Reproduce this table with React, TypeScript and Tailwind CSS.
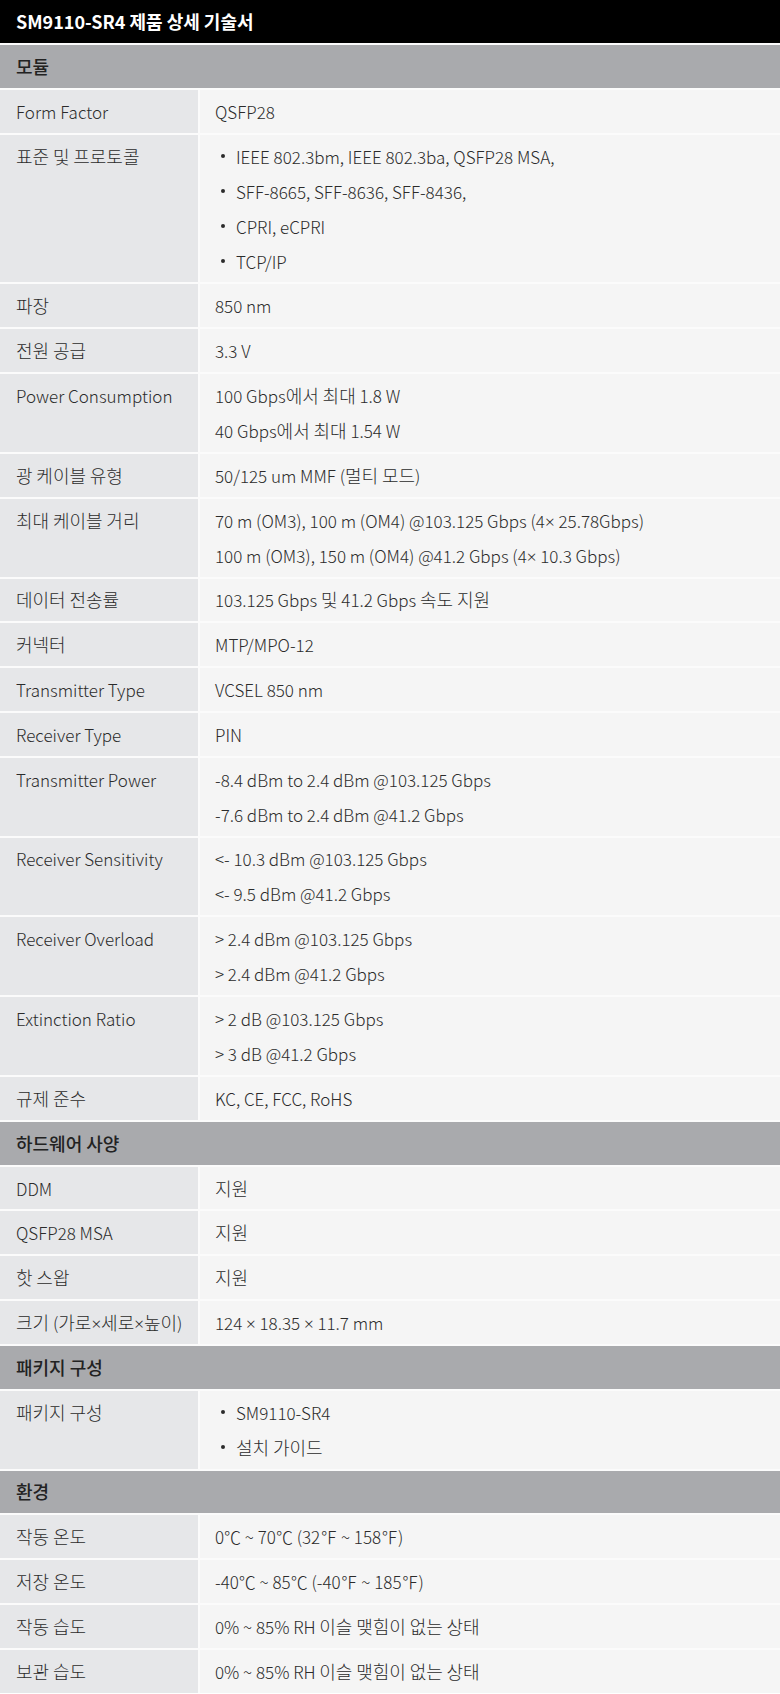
import React from "react";

type Row =
  | { kind: "header"; title: string }
  | { kind: "row"; label: string; lines: string[]; bullets?: boolean };

const rows: Row[] = [
  { kind: "header", title: "모듈" },
  { kind: "row", label: "Form Factor", lines: ["QSFP28"] },
  {
    kind: "row",
    label: "표준 및 프로토콜",
    bullets: true,
    lines: [
      "IEEE 802.3bm, IEEE 802.3ba, QSFP28 MSA,",
      "SFF-8665, SFF-8636, SFF-8436,",
      "CPRI, eCPRI",
      "TCP/IP",
    ],
  },
  { kind: "row", label: "파장", lines: ["850 nm"] },
  { kind: "row", label: "전원 공급", lines: ["3.3 V"] },
  {
    kind: "row",
    label: "Power Consumption",
    lines: ["100 Gbps에서 최대 1.8 W", "40 Gbps에서 최대 1.54 W"],
  },
  { kind: "row", label: "광 케이블 유형", lines: ["50/125 um MMF (멀티 모드)"] },
  {
    kind: "row",
    label: "최대 케이블 거리",
    lines: [
      "70 m (OM3), 100 m (OM4) @103.125 Gbps (4× 25.78Gbps)",
      "100 m (OM3), 150 m (OM4) @41.2 Gbps (4× 10.3 Gbps)",
    ],
  },
  { kind: "row", label: "데이터 전송률", lines: ["103.125 Gbps 및 41.2 Gbps 속도 지원"] },
  { kind: "row", label: "커넥터", lines: ["MTP/MPO-12"] },
  { kind: "row", label: "Transmitter Type", lines: ["VCSEL 850 nm"] },
  { kind: "row", label: "Receiver Type", lines: ["PIN"] },
  {
    kind: "row",
    label: "Transmitter Power",
    lines: ["-8.4 dBm to 2.4 dBm @103.125 Gbps", "-7.6 dBm to 2.4 dBm @41.2 Gbps"],
  },
  {
    kind: "row",
    label: "Receiver Sensitivity",
    lines: ["<- 10.3 dBm @103.125 Gbps", "<- 9.5 dBm @41.2 Gbps"],
  },
  {
    kind: "row",
    label: "Receiver Overload",
    lines: ["> 2.4 dBm @103.125 Gbps", "> 2.4 dBm @41.2 Gbps"],
  },
  {
    kind: "row",
    label: "Extinction Ratio",
    lines: ["> 2 dB @103.125 Gbps", "> 3 dB @41.2 Gbps"],
  },
  { kind: "row", label: "규제 준수", lines: ["KC, CE, FCC, RoHS"] },
  { kind: "header", title: "하드웨어 사양" },
  { kind: "row", label: "DDM", lines: ["지원"] },
  { kind: "row", label: "QSFP28 MSA", lines: ["지원"] },
  { kind: "row", label: "핫 스왑", lines: ["지원"] },
  { kind: "row", label: "크기 (가로×세로×높이)", lines: ["124 × 18.35 × 11.7 mm"] },
  { kind: "header", title: "패키지 구성" },
  {
    kind: "row",
    label: "패키지 구성",
    bullets: true,
    lines: ["SM9110-SR4", "설치 가이드"],
  },
  { kind: "header", title: "환경" },
  { kind: "row", label: "작동 온도", lines: ["0℃ ~ 70℃ (32℉ ~ 158℉)"] },
  { kind: "row", label: "저장 온도", lines: ["-40℃ ~ 85℃ (-40℉ ~ 185℉)"] },
  { kind: "row", label: "작동 습도", lines: ["0% ~ 85% RH 이슬 맺힘이 없는 상태"] },
  { kind: "row", label: "보관 습도", lines: ["0% ~ 85% RH 이슬 맺힘이 없는 상태"] },
];

// Hangul glyphs are drawn a little larger than Latin in the reference; × keeps a narrow Latin glyph
function T({ text }: { text: string }) {
  const parts = text.split(/([\uAC00-\uD7A3]+|×)/);
  return (
    <>
      {parts.map((p, i) => {
        if (!p) return null;
        if (p === "×")
          return (
            <span key={i} className="font-['Noto_Sans']">
              ×
            </span>
          );
        if (/[\uAC00-\uD7A3]/.test(p))
          return (
            <span key={i} className="text-[18px]">
              {p}
            </span>
          );
        return <React.Fragment key={i}>{p}</React.Fragment>;
      })}
    </>
  );
}

export default function App() {
  return (
    <div
      className="w-[780px] bg-[#fbfbfb] flex flex-col gap-[2px] text-[#2b2b2b] font-light"
      style={{ fontFamily: '"Noto Sans CJK KR", "Noto Sans", sans-serif' }}
    >
      <div className="h-[43px] bg-black text-white font-bold text-[18px] pl-4 flex items-center">
        SM9110-SR4 제품 상세 기술서
      </div>
      {rows.map((r, i) =>
        r.kind === "header" ? (
          <div key={i} className="bg-[#a9aaad] pl-4 py-[3.92px]">
            <div className="h-[35px] leading-[35px] text-[18px] font-medium text-[#222] overflow-hidden">
              {r.title}
            </div>
          </div>
        ) : (
          <div key={i} className="flex gap-[2px] text-[17px]">
            <div className="w-[198px] shrink-0 bg-[#e6e7e9] pl-4 py-[3.92px]">
              <div className="h-[35px] leading-[35px] whitespace-nowrap overflow-hidden">
                <T text={r.label} />
              </div>
            </div>
            <div className="flex-1 bg-[#f5f5f5] py-[3.92px] flex flex-col">
              {r.lines.map((l, j) =>
                r.bullets ? (
                  <div key={j} className="h-[35px] leading-[35px] flex items-center pl-[21px] overflow-hidden">
                    <span className="w-[4px] h-[4px] rounded-full bg-[#2b2b2b] shrink-0" />
                    <span className="ml-[11px]">
                      <T text={l} />
                    </span>
                  </div>
                ) : (
                  <div key={j} className="h-[35px] leading-[35px] pl-[15px] overflow-hidden whitespace-nowrap">
                    <T text={l} />
                  </div>
                )
              )}
            </div>
          </div>
        )
      )}
    </div>
  );
}
